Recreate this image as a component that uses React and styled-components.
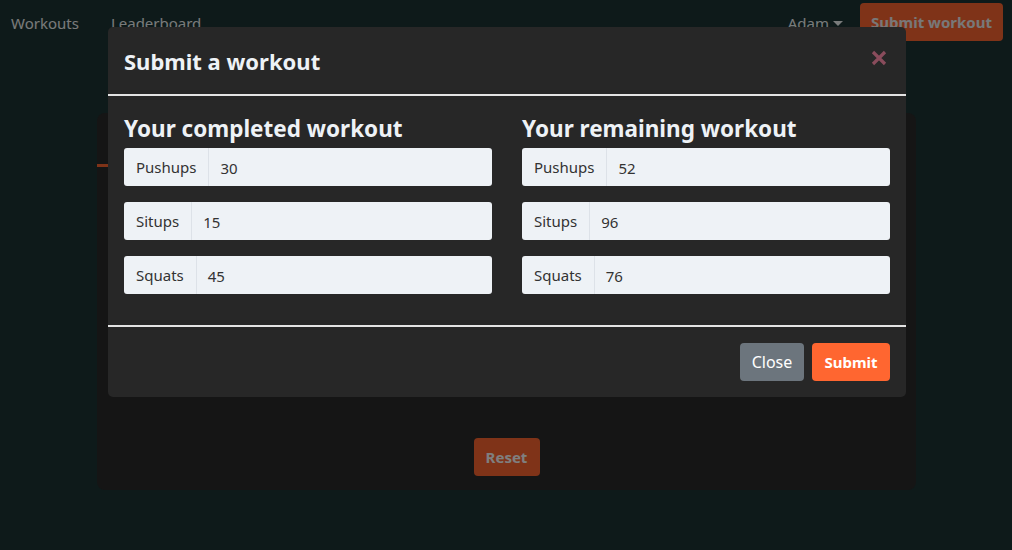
import React from "react";
import styled, { createGlobalStyle } from "styled-components";

const FONT = `"Segoe UI", "Noto Sans", "Open Sans", sans-serif`;

const Global = createGlobalStyle`
  html, body { margin: 0; padding: 0; }
  body {
    background: #1d3434;
    font-family: ${FONT};
    color: #eef2f6;
    width: 1012px;
    height: 550px;
    overflow: hidden;
  }
`;

const Page = styled.div`
  position: relative;
  width: 1012px;
  height: 550px;
`;

const Nav = styled.nav`
  display: flex;
  align-items: center;
  height: 44px;
  padding: 1px 9px 0 11px;
  box-sizing: border-box;
`;

const NavLinks = styled.div`
  display: flex;
  gap: 32px;
  flex: 1;
`;

const NavLink = styled.span`
  font-size: 15px;
  color: #f2f6f6;
`;

const UserMenu = styled.span`
  font-size: 15px;
  color: #f2f6f6;
  margin-right: 17px;
  display: inline-flex;
  align-items: center;
  gap: 4px;
  &::after {
    content: "";
    border-top: 5px solid currentColor;
    border-left: 5px solid transparent;
    border-right: 5px solid transparent;
    margin-top: 2px;
  }
`;

const NavButton = styled.button`
  background: #ff6630;
  color: #f0f0f0;
  border: none;
  border-radius: 4px;
  height: 38px;
  width: 143px;
  padding: 0;
  font: 700 15px ${FONT};
  margin-top: -2px;
`;

const Main = styled.main`
  padding: 69px 96px 0 97px;
`;

const Card = styled.section`
  background: #2a2a2a;
  border-radius: 8px;
  height: 377px;
  display: flex;
  flex-direction: column;
  align-items: center;
  justify-content: flex-end;
  padding-bottom: 14px;
  box-sizing: border-box;
`;

const Accent = styled.div`
  align-self: flex-start;
  width: 120px;
  height: 3px;
  background: #ff6630;
  margin-top: 51px;
  margin-bottom: auto;
`;

const ResetButton = styled.button`
  background: #ff6630;
  color: #ffffff;
  border: none;
  border-radius: 4px;
  height: 38px;
  width: 66px;
  font: 700 15px ${FONT};
`;

const Backdrop = styled.div`
  position: absolute;
  inset: 0;
  background: rgba(0, 0, 0, 0.5);
`;

const Modal = styled.div`
  position: absolute;
  left: 108px;
  top: 27px;
  width: 798px;
  background: #272727;
  border-radius: 5px;
  overflow: hidden;
`;

const ModalHeader = styled.header`
  display: flex;
  align-items: center;
  justify-content: space-between;
  height: 67px;
  padding: 0 16px;
  border-bottom: 2px solid #e3e3e3;
`;

const ModalTitle = styled.h5`
  margin: 0;
  margin-top: 1px;
  font-size: 22px;
  font-weight: 700;
  color: #eef2f6;
`;

const CloseX = styled.button`
  background: none;
  border: none;
  padding: 0;
  margin-top: -6px;
  margin-right: 3px;
  display: flex;
  color: #8a4c5c;
`;

const ModalBody = styled.div`
  display: grid;
  grid-template-columns: 1fr 1fr;
  column-gap: 30px;
  padding: 18px 16px 31px;
  border-bottom: 2px solid #e3e3e3;
`;

const Column = styled.div`
  display: flex;
  flex-direction: column;
  gap: 16px;
`;

const ColumnTitle = styled.h4`
  margin: 0 0 -11px;
  font-size: 22.5px;
  font-weight: 700;
  line-height: 29px;
  color: #eef2f6;
`;

const InputGroup = styled.div`
  display: flex;
  height: 38px;
  background: #eef2f6;
  border-radius: 3px;
  font-size: 15px;
  color: #333;
`;

const Addon = styled.span`
  display: flex;
  align-items: center;
  padding: 0 12px;
  border-right: 1px solid #dde2e8;
`;

const Value = styled.span`
  display: flex;
  align-items: center;
  padding: 2px 11px 0;
`;

const ModalFooter = styled.footer`
  display: flex;
  justify-content: flex-end;
  gap: 8px;
  padding: 16px;
`;

const FooterButton = styled.button`
  height: 38px;
  border: none;
  border-radius: 4px;
  padding: 0;
  font-family: ${FONT};
  font-weight: ${(p) => (p.$primary ? 700 : 400)};
  background: ${(p) => (p.$primary ? "#ff6630" : "#6c757d")};
  color: #ffffff;
  width: ${(p) => (p.$primary ? "78px" : "64px")};
  font-size: ${(p) => (p.$primary ? "15px" : "16px")};
`;

const completed = [
  ["Pushups", 30],
  ["Situps", 15],
  ["Squats", 45],
];
const remaining = [
  ["Pushups", 52],
  ["Situps", 96],
  ["Squats", 76],
];

function WorkoutColumn({ title, rows }) {
  return (
    <Column>
      <ColumnTitle>{title}</ColumnTitle>
      {rows.map(([name, v]) => (
        <InputGroup key={name}>
          <Addon>{name}</Addon>
          <Value>{v}</Value>
        </InputGroup>
      ))}
    </Column>
  );
}

export default function App() {
  return (
    <Page>
      <Global />
      <Nav>
        <NavLinks>
          <NavLink>Workouts</NavLink>
          <NavLink>Leaderboard</NavLink>
        </NavLinks>
        <UserMenu>Adam</UserMenu>
        <NavButton>Submit workout</NavButton>
      </Nav>
      <Main>
        <Card>
          <Accent />
          <ResetButton>Reset</ResetButton>
        </Card>
      </Main>
      <Backdrop />
      <Modal>
        <ModalHeader>
          <ModalTitle>Submit a workout</ModalTitle>
          <CloseX aria-label="Close">
            <svg width="16" height="16" viewBox="0 0 16 16">
              <path d="M2 2L14 14M14 2L2 14" stroke="currentColor" strokeWidth="3.2" strokeLinecap="butt" />
            </svg>
          </CloseX>
        </ModalHeader>
        <ModalBody>
          <WorkoutColumn title="Your completed workout" rows={completed} />
          <WorkoutColumn title="Your remaining workout" rows={remaining} />
        </ModalBody>
        <ModalFooter>
          <FooterButton>Close</FooterButton>
          <FooterButton $primary>Submit</FooterButton>
        </ModalFooter>
      </Modal>
    </Page>
  );
}
